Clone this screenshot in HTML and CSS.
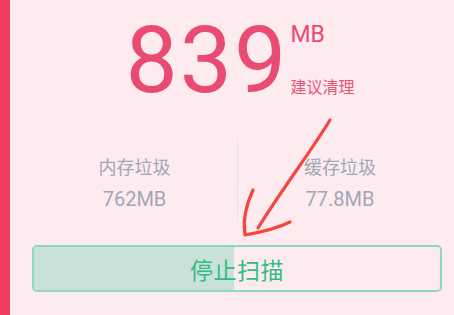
FILE: index.html
```html
<!DOCTYPE html>
<html lang="zh">
<head>
<meta charset="utf-8">
<link rel="stylesheet" href="styles.css">
</head>
<body>
<div class="screen">
  <div class="side-bar"></div>
  <main class="main">
    <section class="hero">
      <div class="amount">839</div>
      <div class="amount-meta">
        <span class="unit">MB</span>
        <span class="hint">建议清理</span>
      </div>
    </section>
    <section class="stats">
      <div class="stat">
        <div class="stat-label">内存垃圾</div>
        <div class="stat-value">762MB</div>
      </div>
      <div class="stat stat-divided">
        <div class="stat-label">缓存垃圾</div>
        <div class="stat-value">77.8MB</div>
      </div>
    </section>
    <button class="scan-btn">
      <span class="scan-fill" style="width:49.3%"></span>
      <span class="scan-text">停止扫描</span>
    </button>
  </main>
  <svg class="annotation" width="454" height="315" viewBox="0 0 454 315">
    <path d="M330 120 C 312 150, 280 192, 258 228" fill="none" stroke="#f5473f" stroke-width="3.2" stroke-linecap="round"/>
    <path d="M253 190 C 246 205, 243 222, 245 235 C 262 232, 278 228, 290 222" fill="none" stroke="#f5473f" stroke-width="3.2" stroke-linecap="round" stroke-linejoin="round"/>
  </svg>
</div>
</body>
</html>
```
FILE: styles.css
```css
* { box-sizing: border-box; }
html, body {
  margin: 0;
  padding: 0;
  background: #fdebef;
  overflow: hidden;
}
.screen {
  position: relative;
  display: flex;
  width: 454px;
  height: 315px;
  font-family: Roboto, "Noto Sans CJK SC", sans-serif;
}
.side-bar {
  width: 10px;
  flex: none;
  background: #f13d5e;
}
.main {
  flex: 1;
  padding: 0 12px 0 22px;
  display: flex;
  flex-direction: column;
}
.hero {
  display: flex;
  justify-content: center;
  align-items: stretch;
  margin-top: 15px;
  padding-left: 6px;
}
.amount {
  font-size: 93px;
  line-height: 92px;
  color: #e94b72;
  letter-spacing: 2px;
}
.amount-meta {
  display: flex;
  flex-direction: column;
  justify-content: space-between;
  margin-left: 2px;
  padding: 8px 0 12px;
}
.unit {
  font-size: 23px;
  line-height: 24px;
  color: #e94b72;
}
.hint {
  font-family: "Noto Sans CJK SC", sans-serif;
  font-size: 16px;
  line-height: 18px;
  color: #ec5377;
}
.stats {
  display: grid;
  grid-template-columns: 1fr 1fr;
  margin-top: 33px;
  height: 80px;
}
.stat {
  display: flex;
  flex-direction: column;
  align-items: center;
  padding-top: 14px;
}
.stat-divided {
  border-left: 1px solid #f3dde2;
}
.stat-label {
  font-family: "Noto Sans CJK SC", sans-serif;
  font-size: 18px;
  line-height: 24px;
  color: #9ea8b7;
}
.stat-value {
  font-size: 20px;
  line-height: 24px;
  margin-top: 9px;
  color: #9ea8b7;
}
.scan-btn {
  position: relative;
  margin-top: 25px;
  height: 47px;
  width: 100%;
  padding: 0;
  border: 2px solid #8cd9bd;
  border-radius: 5px;
  background: transparent;
  overflow: hidden;
  display: flex;
  align-items: center;
  justify-content: center;
  font: inherit;
}
.scan-fill {
  position: absolute;
  left: 0;
  top: 0;
  bottom: 0;
  background: #c9e1d9;
}
.scan-text {
  position: relative;
  font-family: "Noto Sans CJK SC", sans-serif;
  font-size: 23px;
  color: #2fbd86;
  letter-spacing: 0.5px;
}
.annotation {
  position: absolute;
  left: 0;
  top: 0;
  pointer-events: none;
}
```
